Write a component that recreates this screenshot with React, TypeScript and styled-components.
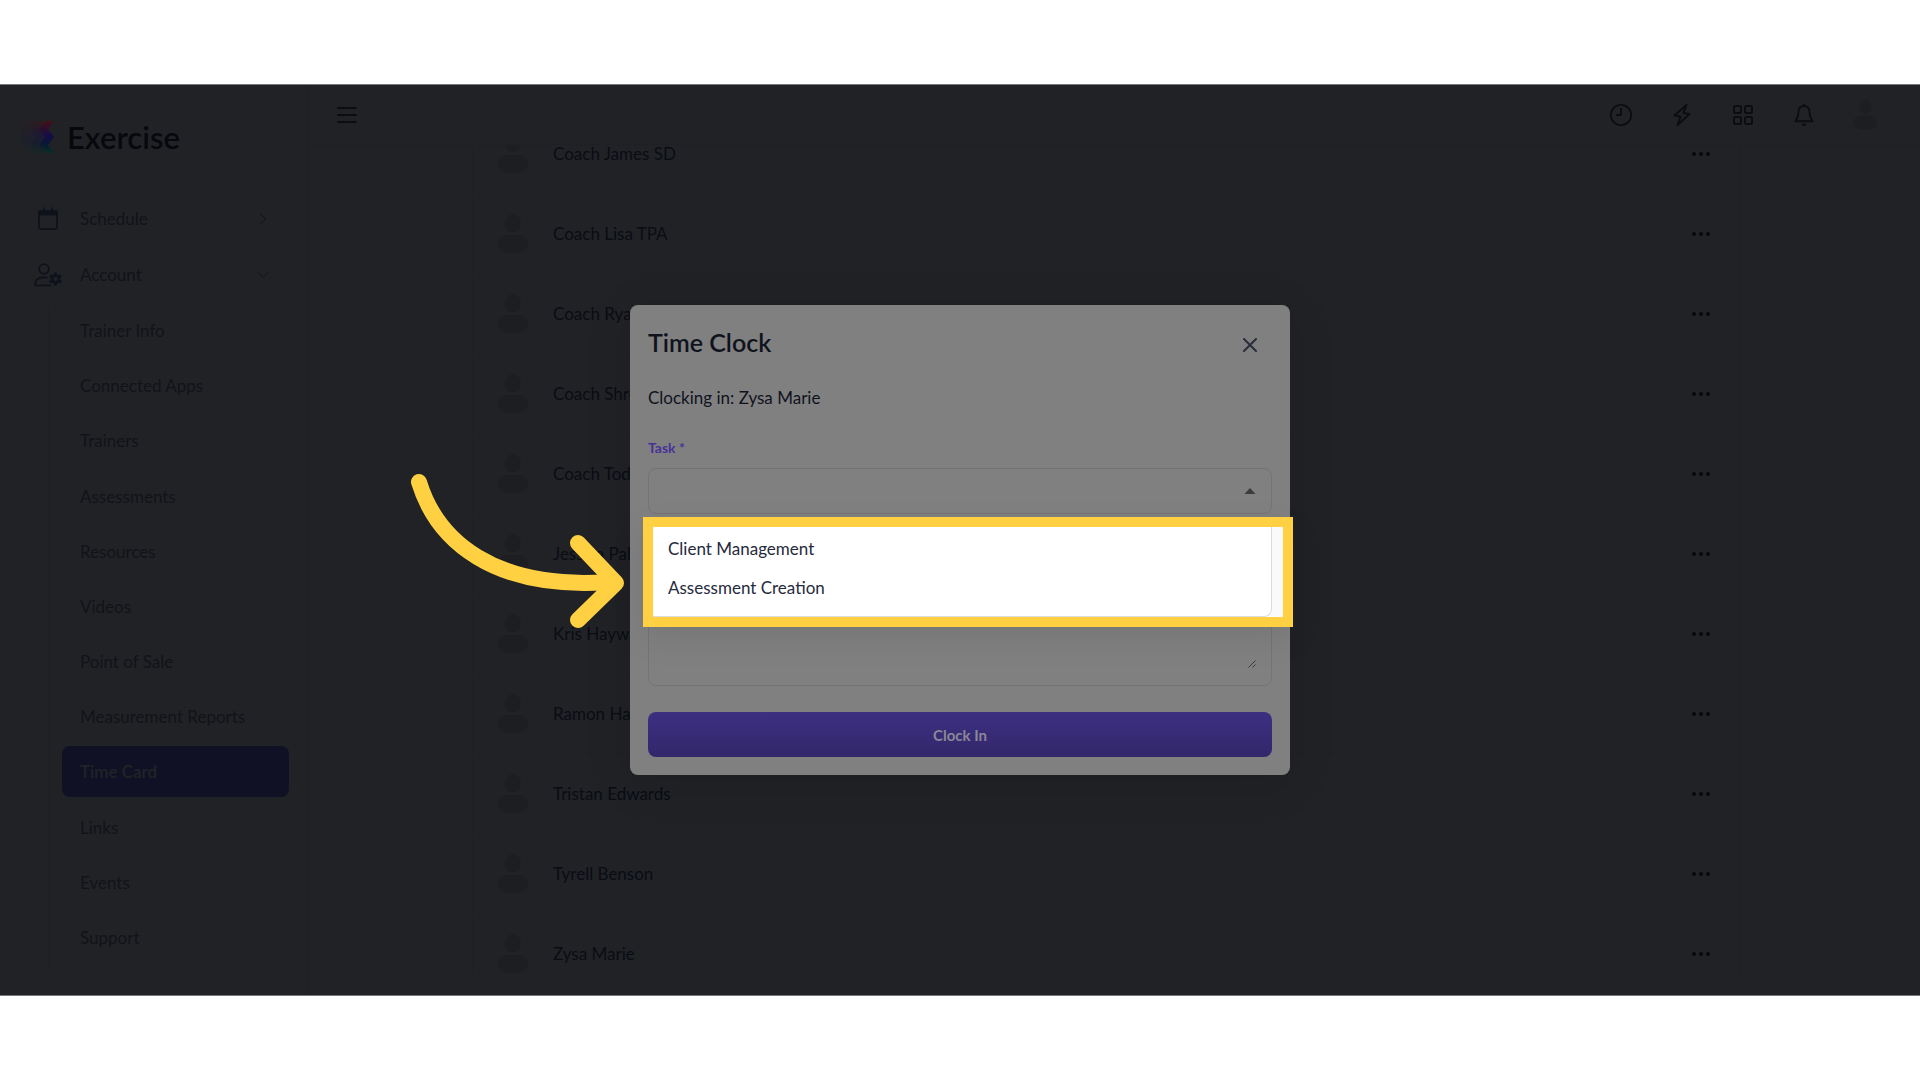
import React from "react";
import styled, { createGlobalStyle } from "styled-components";

const color = {
  surface: "#212226",
  line: "#1e2024",
  avatar: "#1d1e22",
  navText: "#111318",
  navIcon: "#0f121b",
  nameText: "#0a0c14",
  icon: "#0c0d11",
  panel: "#808080",
  heading: "#10131d",
  accent: "#483299",
  marker: "#ffd142",
};

const GlobalStyle = createGlobalStyle`
  *, *::before, *::after { box-sizing: border-box; }
  body { margin: 0; background: #fff; }
  body, button, input, select, textarea {
    font-family: Lato, "Open Sans", sans-serif;
  }
  button { border: 0; padding: 0; background: none; color: inherit; font-size: inherit; }
  ul { list-style: none; margin: 0; padding: 0; }
  h2, p { margin: 0; }
`;

const Page = styled.div`
  display: flex;
  height: 100vh;
  padding: 84px 0;
`;

const Stage = styled.div`
  position: relative;
  flex: 1;
  display: flex;
  min-width: 0;
  overflow: hidden;
  background: ${color.surface};
  border-top: 1px solid #77787b;
  border-bottom: 1px solid #77787b;
`;

const Sidebar = styled.aside`
  flex: 0 0 308px;
  display: flex;
  flex-direction: column;
  padding: 36px 18px 25px 22px;
  border-right: 1px solid ${color.line};
`;

const Brand = styled.a`
  display: flex;
  align-items: center;
  gap: 12px;
  height: 32px;
  margin-bottom: 40px;
  color: #07080d;
  font-size: 31px;
  line-height: 32px;
  font-weight: 600;
  text-decoration: none;
`;

const Nav = styled.nav`
  flex: 1;
  display: flex;
  flex-direction: column;
  gap: 5px;
  min-height: 0;
`;

const NavGroup = styled.button`
  display: flex;
  align-items: center;
  height: 51px;
  padding: 0 16px 0 12px;
  color: ${color.navText};
  font-size: 17px;
  text-align: left;
`;

const NavIcon = styled.span`
  display: flex;
  justify-content: center;
  width: 28px;
  margin-right: 18px;
`;

const NavLabel = styled.span`
  flex: 1;
`;

const ChevronBox = styled.span`
  display: flex;
  justify-content: center;
  width: 20px;
`;

const SubNav = styled.ul`
  flex: 1;
  display: flex;
  flex-direction: column;
  justify-content: space-between;
  margin-left: 26px;
  padding: 0 0 7px 13px;
  border-left: 1px solid ${color.line};
`;

const SubLink = styled.a<{ $active?: boolean }>`
  display: flex;
  align-items: center;
  height: 51px;
  padding: 0 18px;
  border-radius: 8px;
  background: ${(p) => (p.$active ? "#111126" : "transparent")};
  color: ${(p) => (p.$active ? "#222327" : color.navText)};
  font-size: 17px;
  font-weight: ${(p) => (p.$active ? 600 : 400)};
  text-decoration: none;
`;

const Main = styled.main`
  flex: 1;
  display: flex;
  flex-direction: column;
  min-width: 0;
`;

const TopBar = styled.header`
  display: flex;
  align-items: center;
  justify-content: space-between;
  height: 60px;
  padding: 0 39px 0 23px;
  border-bottom: 1px solid ${color.line};
  color: ${color.icon};
`;

const TopActions = styled.div`
  display: flex;
  gap: 29px;
`;

const IconButton = styled.button`
  display: flex;
  align-items: center;
  justify-content: center;
  width: 32px;
  height: 32px;
`;

const CloseButton = styled(IconButton)`
  height: 44px;
`;

const ListArea = styled.div`
  flex: 1;
  min-height: 0;
  padding: 0 180px 20px 164px;
  overflow: hidden;
`;

const ListCard = styled.div`
  height: 100%;
  overflow: hidden;
  border: solid ${color.line};
  border-width: 0 1px;
`;

const Roster = styled.ul`
  margin-top: -31px;
`;

const RosterRow = styled.li`
  display: flex;
  align-items: center;
  height: 80px;
  padding: 0 22px 0 24px;
  border-bottom: 1px solid ${color.line};
  color: ${color.nameText};
  font-size: 17px;
  line-height: 16px;
`;

const RosterName = styled.span`
  flex: 1;
  margin-left: 24px;
`;

const Overlay = styled.div`
  position: absolute;
  inset: 0;
  display: flex;
  align-items: center;
  justify-content: center;
`;

const Dialog = styled.section`
  position: relative;
  width: 660px;
  padding: 18px;
  border-radius: 8px;
  background: ${color.panel};
  color: ${color.heading};
  box-shadow: 0 8px 48px rgba(0, 0, 0, 0.12);
`;

const DialogHead = styled.div`
  display: flex;
  align-items: flex-start;
  justify-content: space-between;
  height: 44px;
  padding-right: 6px;
`;

const DialogTitle = styled.h2`
  font-size: 25px;
  line-height: 38px;
  font-weight: 600;
`;

const DialogText = styled.p`
  margin-top: 19px;
  font-size: 17px;
  line-height: 24px;
`;

const FieldLabel = styled.label`
  display: block;
  margin: 28px 0 10px;
  color: ${color.accent};
  font-size: 14px;
  line-height: 20px;
  font-weight: 700;
`;

const SelectWrap = styled.div`
  position: relative;
`;

const TaskSelect = styled.select`
  display: block;
  appearance: none;
  width: 100%;
  height: 46px;
  padding: 0 32px 0 16px;
  border: 1px solid #747474;
  border-radius: 8px;
  background: transparent;
  font-size: 17px;
`;

const Caret = styled.svg`
  position: absolute;
  top: 20px;
  right: 16px;
`;

const Marker = styled.div`
  position: absolute;
  z-index: 1;
  top: 49px;
  left: -5px;
  right: -21px;
  padding-right: 11px;
  border: 10px solid ${color.marker};
  background: #fafafa;
  box-shadow: 0 12px 32px rgba(0, 0, 0, 0.08);
`;

const Menu = styled.ul`
  padding: 2px 0 9px;
  border: solid #dcdcdc;
  border-width: 0 1px 1px 0;
  border-bottom-right-radius: 8px;
  background: #fff;
`;

const MenuItem = styled.li`
  height: 39px;
  padding-left: 15px;
  color: #262a3d;
  font-size: 17px;
  line-height: 39px;
`;

const NotesWrap = styled.div`
  margin-top: 46px;
  padding: 16px;
  border: 1px solid #747474;
  border-radius: 8px;
`;

const Notes = styled.textarea`
  display: block;
  width: 100%;
  height: 92px;
  padding: 0;
  border: 0;
  outline: 0;
  resize: none;
  background: transparent;
  font-size: 17px;
`;

const Grip = styled.svg`
  position: absolute;
  right: 34px;
  bottom: 107px;
`;

const SubmitButton = styled.button`
  display: block;
  width: 100%;
  height: 45px;
  margin-top: 26px;
  border-radius: 8px;
  background: linear-gradient(#3d2f80, #32276b);
  color: #8a8797;
  font-size: 15px;
  font-weight: 700;
`;

const Pointer = styled.svg`
  position: absolute;
  top: 160px;
  left: -225px;
`;

const Logo = () => {
  const band = "M8 0H15L9 8L15 16L9 24L15 32H8L0 24L6 16L0 8Z";
  return (
    <svg width="33" height="32" viewBox="0 0 33 32" aria-hidden="true">
      <defs>
        <linearGradient id="spectrum" x1="0" y1="0" x2="0" y2="1">
          <stop offset="0" stopColor="#460d16" />
          <stop offset="0.25" stopColor="#2a0f2c" />
          <stop offset="0.45" stopColor="#150d48" />
          <stop offset="0.7" stopColor="#0a1636" />
          <stop offset="1" stopColor="#063022" />
        </linearGradient>
      </defs>
      <path d="M4 0H17L9 8L15 16L9 24L17 32H4L0 28V4Z" fill="url(#spectrum)" opacity="0.16" />
      <path d="M8 0H17L9 8L15 16L9 24L17 32H8L0 24L6 16L0 8Z" transform="translate(8 0)" fill="url(#spectrum)" opacity="0.4" />
      <path d={band} transform="translate(17 0)" fill="url(#spectrum)" />
    </svg>
  );
};

const CalendarIcon = () => (
  <svg width="20" height="23" viewBox="0 0 20 23" fill="none" stroke={color.navIcon} strokeWidth="1.800" aria-hidden="true">
    <rect x="1" y="4" width="18" height="18" rx="2.500" />
    <path d="M1.500 4.500H18.500V7.500H1.500Z" fill={color.navIcon} />
    <path d="M6 0.500V4M14 0.500V4" />
  </svg>
);

const UserGearIcon = () => (
  <svg width="28" height="24" viewBox="0 0 28 24" fill="none" stroke={color.navIcon} strokeWidth="1.800" aria-hidden="true">
    <circle cx="10" cy="6" r="4.800" />
    <path d="M13.500 14.500H8C4 14.500 1.200 17.500 1.200 21V22.300H17" strokeLinejoin="round" />
    <circle cx="21.500" cy="16" r="3.500" strokeWidth="2.800" />
    <path
      d="M21.500 9.500V12M21.500 20V22.500M15.900 12.800L18 14M25 18L27.100 19.200M15.900 19.200L18 18M25 14L27.100 12.800"
      strokeWidth="2.800"
    />
  </svg>
);

const ChevronRightIcon = () => (
  <svg width="12" height="12" viewBox="0 0 12 12" fill="none" stroke={color.navText} aria-hidden="true">
    <path d="M3 0.500L8.500 6L3 11.500" />
  </svg>
);

const ChevronDownIcon = () => (
  <svg width="12" height="12" viewBox="0 0 12 12" fill="none" stroke={color.navText} aria-hidden="true">
    <path d="M0.500 3L6 8.500L11.500 3" />
  </svg>
);

const MenuIcon = () => (
  <svg width="20" height="18" viewBox="0 0 20 18" stroke="currentColor" strokeWidth="2" strokeLinecap="round" aria-hidden="true">
    <path d="M1 2H19M1 9H19M1 16H19" />
  </svg>
);

const ClockIcon = () => (
  <svg width="24" height="24" viewBox="0 0 24 24" fill="none" stroke="currentColor" strokeWidth="1.800" aria-hidden="true">
    <circle cx="12" cy="12" r="10.200" />
    <path d="M12 5V12H7" />
  </svg>
);

const BoltIcon = () => (
  <svg width="24" height="24" viewBox="0 0 24 24" fill="none" stroke="currentColor" strokeWidth="2" strokeLinejoin="round" aria-hidden="true">
    <path d="M16.500 2L4.500 12.500L10.500 13.500L7.500 22L19.500 11L13.500 10Z" />
  </svg>
);

const AppsIcon = () => (
  <svg width="20" height="20" viewBox="0 0 20 20" fill="none" stroke="currentColor" strokeWidth="2" aria-hidden="true">
    {[1, 12].map((y) =>
      [1, 12].map((x) => <rect key={`${x}-${y}`} x={x} y={y} width="7" height="7" rx="1.500" />)
    )}
  </svg>
);

const BellIcon = () => (
  <svg width="24" height="24" viewBox="0 0 24 24" fill="none" stroke="currentColor" strokeWidth="1.900" strokeLinejoin="round" aria-hidden="true">
    <path d="M12 3C8.500 3 6.500 5.500 6.500 9C6.500 13.500 5 16 3.500 18.300H20.500C19 16 17.500 13.500 17.500 9C17.500 5.500 15.500 3 12 3Z" />
    <path d="M12 1V3" />
    <path d="M9.800 20.800H14.200A2.200 2.200 0 0 1 9.800 20.800Z" fill="currentColor" stroke="none" />
  </svg>
);

const PersonIcon = ({ size }: { size: number }) => (
  <svg width={size} height={size * 1.25} viewBox="0 0 32 40" fill={color.avatar} aria-hidden="true">
    <ellipse cx="16" cy="9.500" rx="8" ry="9" />
    <path d="M12 21H20C27 21 31 25 31 30C31 36 26 39 16 39S1 36 1 30C1 25 5 21 12 21Z" />
  </svg>
);

const DotsIcon = () => (
  <svg width="18" height="4" viewBox="0 0 18 4" fill="#08090d" aria-hidden="true">
    <circle cx="2" cy="2" r="2" />
    <circle cx="9" cy="2" r="2" />
    <circle cx="16" cy="2" r="2" />
  </svg>
);

const CloseIcon = () => (
  <svg width="14" height="14" viewBox="0 0 14 14" stroke="#2a2e3a" strokeWidth="2" strokeLinecap="round" aria-hidden="true">
    <path d="M1 1L13 13M13 1L1 13" />
  </svg>
);

const accountLinks = [
  "Trainer Info",
  "Connected Apps",
  "Trainers",
  "Assessments",
  "Resources",
  "Videos",
  "Point of Sale",
  "Measurement Reports",
  "Time Card",
  "Links",
  "Events",
  "Support",
];

const trainers = [
  "Coach James SD",
  "Coach Lisa TPA",
  "Coach Rya",
  "Coach Shre",
  "Coach Tod",
  "Jessica Pal",
  "Kris Haywa",
  "Ramon Har",
  "Tristan Edwards",
  "Tyrell Benson",
  "Zysa Marie",
];

const tasks = ["Client Management", "Assessment Creation"];

export default function App() {
  return (
    <Page>
      <GlobalStyle />
      <Stage>
        <Sidebar>
          <Brand href="#">
            <Logo />
            Exercise
          </Brand>
          <Nav>
            <NavGroup type="button">
              <NavIcon><CalendarIcon /></NavIcon>
              <NavLabel>Schedule</NavLabel>
              <ChevronBox><ChevronRightIcon /></ChevronBox>
            </NavGroup>
            <NavGroup type="button" aria-expanded="true">
              <NavIcon><UserGearIcon /></NavIcon>
              <NavLabel>Account</NavLabel>
              <ChevronBox><ChevronDownIcon /></ChevronBox>
            </NavGroup>
            <SubNav>
              {accountLinks.map((name) => (
                <li key={name}>
                  <SubLink href="#" $active={name === "Time Card"}>{name}</SubLink>
                </li>
              ))}
            </SubNav>
          </Nav>
        </Sidebar>

        <Main>
          <TopBar>
            <IconButton type="button" aria-label="Menu"><MenuIcon /></IconButton>
            <TopActions>
              <IconButton type="button" aria-label="Time clock"><ClockIcon /></IconButton>
              <IconButton type="button" aria-label="Quick actions"><BoltIcon /></IconButton>
              <IconButton type="button" aria-label="Apps"><AppsIcon /></IconButton>
              <IconButton type="button" aria-label="Notifications"><BellIcon /></IconButton>
              <IconButton type="button" aria-label="Profile"><PersonIcon size={25} /></IconButton>
            </TopActions>
          </TopBar>
          <ListArea>
            <ListCard>
              <Roster>
                {trainers.map((name) => (
                  <RosterRow key={name}>
                    <PersonIcon size={32} />
                    <RosterName>{name}</RosterName>
                    <IconButton type="button" aria-label="More"><DotsIcon /></IconButton>
                  </RosterRow>
                ))}
              </Roster>
            </ListCard>
          </ListArea>
        </Main>

        <Overlay>
          <Dialog role="dialog" aria-labelledby="dialog-title">
            <DialogHead>
              <DialogTitle id="dialog-title">Time Clock</DialogTitle>
              <CloseButton type="button" aria-label="Close"><CloseIcon /></CloseButton>
            </DialogHead>
            <DialogText>Clocking in: Zysa Marie</DialogText>
            <FieldLabel htmlFor="task">Task *</FieldLabel>
            <SelectWrap>
              <TaskSelect id="task" defaultValue="">
                <option value="" />
              </TaskSelect>
              <Caret width="12" height="6" viewBox="0 0 12 6" fill="#3c3c3c" aria-hidden="true">
                <path d="M6 0L11.500 6H0.500Z" />
              </Caret>
              <Marker>
                <Menu>
                  {tasks.map((task) => (
                    <MenuItem key={task}>{task}</MenuItem>
                  ))}
                </Menu>
              </Marker>
            </SelectWrap>
            <NotesWrap>
              <Notes aria-label="Notes" />
            </NotesWrap>
            <Grip width="8" height="8" viewBox="0 0 8 8" stroke="#3c3c3c" aria-hidden="true">
              <path d="M0.500 7.500L7.500 0.500M4.500 7.500L7.500 4.500" />
            </Grip>
            <SubmitButton type="button">Clock In</SubmitButton>
            <Pointer
              width="225"
              height="165"
              viewBox="405 465 225 165"
              fill="none"
              stroke={color.marker}
              strokeWidth="16"
              strokeLinecap="round"
              strokeLinejoin="round"
              aria-hidden="true"
            >
              <path d="M419 482C437 541 494 590 608 582" />
              <path d="M578 543L616 583L578 620" />
            </Pointer>
          </Dialog>
        </Overlay>
      </Stage>
    </Page>
  );
}
